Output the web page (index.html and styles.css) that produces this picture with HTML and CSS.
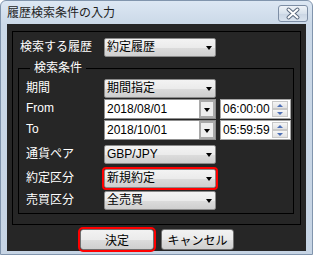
FILE: index.html
```html
<!DOCTYPE html>
<html lang="ja">
  <head>
    <meta charset="UTF-8" />
    <title>履歴検索条件の入力</title>
    <link rel="stylesheet" href="styles.css">
  </head>
  <body>
    <div class="window">
      <div class="titlebar">
        <span class="title">履歴検索条件の入力</span>
        <span class="close">
          <svg width="28" height="15" viewBox="0 0 28 15">
            <path d="M9.5 3.5 L18.5 11.5 M18.5 3.5 L9.5 11.5" stroke="#59687c" stroke-width="4" stroke-linecap="round" fill="none" />
            <path d="M9.5 3.5 L18.5 11.5 M18.5 3.5 L9.5 11.5" stroke="#ffffff" stroke-width="2" stroke-linecap="round" fill="none" />
          </svg>
        </span>
      </div>
      <div class="client">
        <div class="outer">
          <div class="toprow">
            <span class="label">検索する履歴</span>
            <div class="combo">約定履歴</div>
          </div>
          <fieldset class="group">
            <legend>検索条件</legend>
            <div class="row r1">
              <span class="label">期間</span>
              <div class="combo">期間指定</div>
            </div>
            <div class="row r2">
              <span class="label">From</span>
              <div class="date"><span class="date-text">2018/08/01</span><span class="dd"></span></div>
              <div class="time"><span class="time-text">06:00:00</span><span class="spin"><span class="up"></span><span class="down"></span></span></div>
            </div>
            <div class="row r3">
              <span class="label">To</span>
              <div class="date"><span class="date-text">2018/10/01</span><span class="dd"></span></div>
              <div class="time"><span class="time-text">05:59:59</span><span class="spin"><span class="up"></span><span class="down"></span></span></div>
            </div>
            <div class="row r4">
              <span class="label">通貨ペア</span>
              <div class="combo">GBP/JPY</div>
            </div>
            <div class="row r5">
              <span class="label">約定区分</span>
              <div class="combo marked">新規約定</div>
            </div>
            <div class="row r6">
              <span class="label">売買区分</span>
              <div class="combo">全売買</div>
            </div>
          </fieldset>
        </div>
        <div class="buttons">
          <button class="btn ok marked">決定</button>
          <button class="btn cancel">キャンセル</button>
        </div>
      </div>
    </div>
  </body>
</html>
```
FILE: styles.css
```css
body {
  margin: 0;
  font-family: "Liberation Sans", "Noto Sans CJK JP", sans-serif;
  font-size: 12px;
}
.window {
  width: 313px;
  height: 255px;
  box-sizing: border-box;
  border: 1px solid #8195ad;
  border-radius: 6px 6px 0 0;
  background: linear-gradient(#dce7f3, #cbd9e8 23px, #c6d4e4);
  display: flex;
  flex-direction: column;
}
.titlebar {
  height: 23px;
  display: flex;
  align-items: center;
  padding-left: 6px;
}
.title {
  color: #1e1e1e;
  line-height: 14px;
}
.close {
  margin-left: auto;
  margin-right: 4px;
  align-self: flex-start;
  margin-top: 4px;
  width: 28px;
  height: 15px;
  border: 1px solid #7d8ea5;
  border-radius: 3px;
  background: linear-gradient(#eef3f8, #d7e1ec 50%, #c9d5e3 51%, #d9e3ee);
  display: flex;
}

.client {
  margin: 0 6px;
  height: 227px;
  box-sizing: border-box;
  background: #262626;
  padding: 7px 0 0 5px;
}
.outer {
  width: 289px;
  height: 194px;
  box-sizing: border-box;
  border: 1px solid #000;
}
.toprow {
  display: flex;
  margin-top: 6px;
  padding-left: 7px;
  height: 19px;
}
.label {
  color: #fff;
  line-height: 19px;
}
.toprow .label {
  width: 84px;
}
.row .label {
  width: 78px;
}

.combo {
  width: 112px;
  height: 19px;
  box-sizing: border-box;
  border: 1px solid #8a8a8a;
  border-radius: 2px;
  background: linear-gradient(#f3f3f3, #ebebeb 50%, #dcdcdc 51%, #cfcfcf);
  padding-left: 2px;
  line-height: 17px;
  color: #000;
  display: flex;
}
.combo::after {
  content: "";
  margin: 7px 3px 0 auto;
  width: 0;
  height: 0;
  border-left: 3.5px solid transparent;
  border-right: 3.5px solid transparent;
  border-top: 4px solid #000;
}
.marked {
  outline: 2px solid #ff0000;
}

.group {
  margin: 4px 0 0 5px;
  width: 276px;
  box-sizing: border-box;
  border: 1px solid #000;
  padding: 0 0 3px 7px;
  min-width: 0;
}
.group legend {
  margin-left: 4px;
  padding: 0 4px;
  color: #fff;
  line-height: 14px;
}
.row {
  display: flex;
  align-items: flex-start;
}
.r1 { margin-top: 4px; }
.r2 { margin-top: 1px; }
.r3 { margin-top: 1px; }
.r4 { margin-top: 5px; }
.r5 { margin-top: 5px; }
.r6 { margin-top: 3px; }

.date {
  width: 112px;
  height: 20px;
  box-sizing: border-box;
  border: 1px solid #8f8f8f;
  background: #fff;
  display: flex;
}
.date-text {
  flex: 1;
  padding-left: 2px;
  line-height: 18px;
}
.dd {
  width: 16px;
  height: 18px;
  box-sizing: border-box;
  border: 2px solid #a9a9a9;
  background: #eeeeee;
  display: flex;
  justify-content: center;
  align-items: center;
}
.dd::after {
  content: "";
  width: 0;
  height: 0;
  margin-top: 1px;
  border-left: 3.5px solid transparent;
  border-right: 3.5px solid transparent;
  border-top: 4px solid #000;
}
.time {
  margin-left: 4px;
  width: 71px;
  height: 20px;
  box-sizing: border-box;
  border: 1px solid #a5a5a5;
  background: #fff;
  display: flex;
}
.time-text {
  flex: 1;
  padding-left: 2px;
  line-height: 18px;
}
.spin {
  width: 16px;
  margin: 1px 2px 1px 0;
  display: flex;
  flex-direction: column;
}
.up,
.down {
  flex: 1;
  border: 1px solid #c8c8c8;
  background: linear-gradient(#f6f6f6, #e2e2e2);
  display: flex;
  justify-content: center;
  align-items: center;
}
.up::after {
  content: "";
  border-left: 3.5px solid transparent;
  border-right: 3.5px solid transparent;
  border-bottom: 3px solid #4d6fb5;
}
.down::after {
  content: "";
  border-left: 3.5px solid transparent;
  border-right: 3.5px solid transparent;
  border-top: 3px solid #4d6fb5;
}

.buttons {
  display: flex;
  margin-top: 4px;
  padding-left: 68px;
  gap: 7px;
}
.btn {
  height: 21px;
  border: 1px solid #707070;
  border-radius: 3px;
  background: linear-gradient(#f2f2f2, #ebebeb 50%, #dddddd 51%, #cfcfcf);
  font-family: "Liberation Sans", "Noto Sans CJK JP", sans-serif;
  font-size: 12px;
  color: #000;
  padding: 0;
}
.ok {
  width: 74px;
}
.cancel {
  width: 73px;
}
```
